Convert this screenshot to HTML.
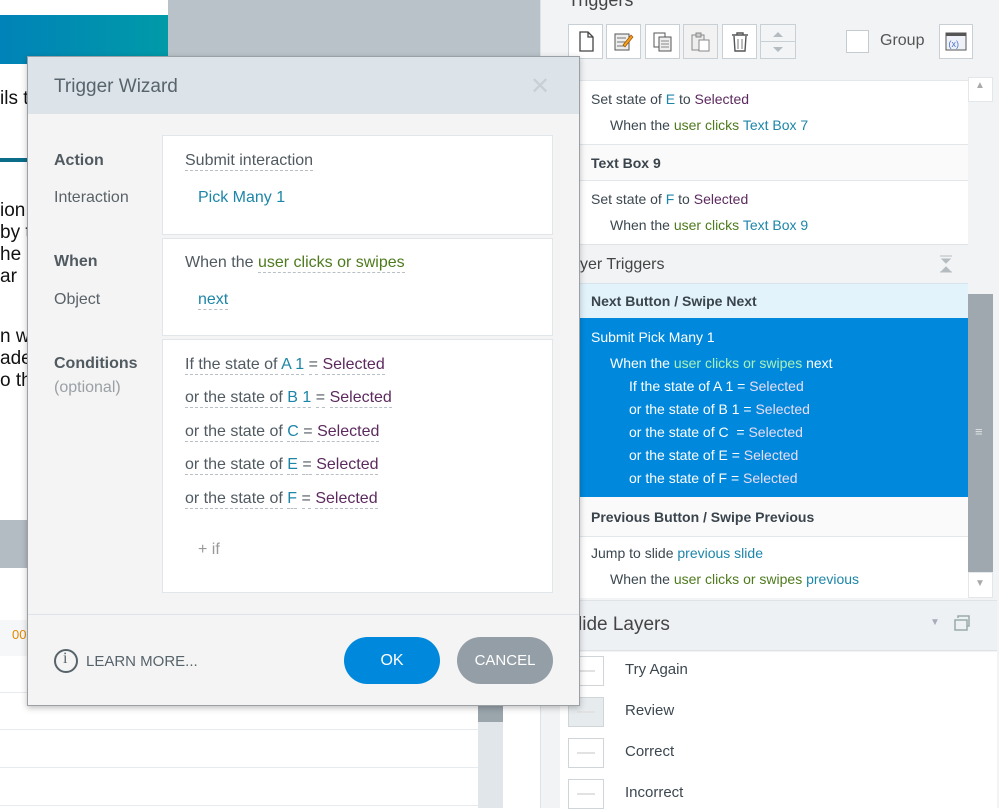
<!DOCTYPE html>
<html><head><meta charset="utf-8"><style>
*{margin:0;padding:0;box-sizing:border-box}
body{width:999px;height:808px;overflow:hidden;position:relative;background:#fff;font-family:"Liberation Sans",sans-serif;}
.a{position:absolute}
.t{position:absolute;white-space:nowrap;font-size:15px;color:#505a60}
.u{border-bottom:1px dashed #b8c0c6;padding-bottom:1px}
.bl{color:#1d86a8}.pu{color:#5c2a5e}.gr{color:#4e7a1e}
.rp{position:absolute;white-space:nowrap;font-size:14px;color:#3c4750}
.b{font-weight:bold;color:#3a444c}
.tb{position:absolute;top:24px;width:35px;height:35px;background:#fff;border:1px solid #c9d0d5}
.th{position:absolute;left:568px;width:36px;height:30px;background:#fff;border:1px solid #d0d5d9}
.th::after{content:"";position:absolute;left:8px;top:13px;width:18px;height:2px;background:#e2e2e2}
</style></head><body>
<div class="a" style="left:0;top:0;width:168px;height:520px;background:#fff"></div>
<div class="a" style="left:0;top:15px;width:168px;height:49px;background:linear-gradient(90deg,#0083b8,#009aa8)"></div>
<div class="a" style="left:0;top:158px;width:30px;height:4px;background:#0b6d88"></div>
<div class="a" style="left:168px;top:0;width:372px;height:520px;background:#b8c2c8"></div>
<div class="t" style="left:0;top:88px;font-size:19px;color:#111">ils t</div>
<div class="t" style="left:0;top:200px;font-size:19px;color:#111;line-height:22px">ion<br>by t<br>he r<br>ar</div>
<div class="t" style="left:0;top:326px;font-size:19px;color:#111;line-height:22px">n wh<br>ade<br>o th</div>
<div class="a" style="left:0;top:520px;width:540px;height:48px;background:#b3bcc3"></div>
<div class="a" style="left:0;top:568px;width:540px;height:240px;background:#fff"></div>
<div class="a" style="left:0;top:620px;width:478px;height:36px;background:#f6f7f8"></div>
<div class="t" style="left:12px;top:627px;font-size:13px;color:#e08a00">00</div>
<div class="a" style="left:0;top:692px;width:478px;height:1px;background:#e7ebee"></div>
<div class="a" style="left:0;top:729px;width:478px;height:1px;background:#e7ebee"></div>
<div class="a" style="left:0;top:767px;width:478px;height:1px;background:#e7ebee"></div>
<div class="a" style="left:0;top:805px;width:478px;height:1px;background:#e7ebee"></div>
<div class="a" style="left:478px;top:568px;width:25px;height:240px;background:#e1e6ea"></div>
<div class="a" style="left:478px;top:700px;width:25px;height:22px;background:#9aa5ac"></div>

<div class="a" style="left:540px;top:0;width:459px;height:808px;background:#f1f3f5;border-left:1px solid #dde2e6"></div>
<div class="t" style="left:568px;top:-10px;font-size:18px;color:#444">Triggers</div>
<div class="tb" style="left:568px"><svg width="33" height="33"><path d="M11 7h8l5 5v14H11z M19 7v5h5" fill="none" stroke="#444" stroke-width="1.3"/></svg></div>
<div class="tb" style="left:606px"><svg width="33" height="33"><rect x="8" y="9" width="14" height="16" fill="#eee" stroke="#555"/><path d="M10 13h9M10 17h9M10 21h7" stroke="#777"/><path d="M16 20l8-10 2 2-8 10z" fill="#f0a020" stroke="#a05000" stroke-width=".7"/></svg></div>
<div class="tb" style="left:645px"><svg width="33" height="33"><rect x="8" y="8" width="11" height="14" fill="#fff" stroke="#555"/><rect x="13" y="12" width="12" height="14" fill="#eee" stroke="#555"/><path d="M15 16h8M15 19h8M15 22h8" stroke="#888"/></svg></div>
<div class="tb" style="left:683px;background:#f2f2f2"><svg width="33" height="33"><rect x="8" y="10" width="12" height="15" fill="#eee" stroke="#888"/><rect x="12" y="8" width="5" height="4" fill="#ccc" stroke="#888"/><rect x="15" y="15" width="10" height="11" fill="#fff" stroke="#888"/></svg></div>
<div class="tb" style="left:722px"><svg width="33" height="33"><path d="M9 10h16M14 10V8h6v2M11 11l1 15h10l1-15" fill="none" stroke="#555" stroke-width="1.4"/><path d="M15 14v10M19 14v10" stroke="#777"/></svg></div>
<div class="tb" style="left:760px;width:36px;background:#f3f4f5"><div class="a" style="left:0;top:16px;width:34px;height:1px;background:#c9d0d5"></div><svg class="a" style="left:0;top:0" width="34" height="34"><path d="M12 12l5-5 5 5z M12 22l5 5 5-5z" fill="#b5bcc1"/></svg></div>
<div class="a" style="left:846px;top:30px;width:23px;height:23px;background:#fff;border:1px solid #c5ccd1"></div>
<div class="t" style="left:880px;top:32px;font-size:16px;color:#555">Group</div>
<div class="tb" style="left:939px;width:34px"><svg width="33" height="33"><rect x="6" y="8" width="20" height="17" fill="#eef2f8" stroke="#555"/><rect x="6" y="8" width="20" height="3" fill="#555"/><text x="8.5" y="22" font-size="9" fill="#4a6fd0" font-family="Liberation Sans">(x)</text></svg></div>

<div class="a" style="left:560px;top:80px;width:408px;height:518px;background:#fff;border-top:1px solid #e3e7ea"></div>
<div class="rp" style="left:591px;top:91px">Set state of <span class="bl">E</span> to <span class="pu">Selected</span></div>
<div class="rp" style="left:610px;top:117px">When the <span class="gr">user clicks</span> <span class="bl">Text Box 7</span></div>
<div class="a" style="left:560px;top:144px;width:408px;height:37px;background:#fafafa;border-top:1px solid #e3e7ea;border-bottom:1px solid #e3e7ea"></div>
<div class="rp b" style="left:591px;top:155px">Text Box 9</div>
<div class="rp" style="left:591px;top:191px">Set state of <span class="bl">F</span> to <span class="pu">Selected</span></div>
<div class="rp" style="left:610px;top:217px">When the <span class="gr">user clicks</span> <span class="bl">Text Box 9</span></div>
<div class="a" style="left:560px;top:244px;width:408px;height:39px;background:#f1f3f5;border-top:1px solid #e0e4e7"></div>
<div class="t" style="left:580px;top:256px;font-size:16px;color:#444">yer Triggers</div>
<svg class="a" style="left:938px;top:255px" width="16" height="18"><path d="M2 1h12M4 4h8l-4 4zM4 16h8l-4-4zM2 17h12" fill="#b5bcc1" stroke="#b5bcc1"/></svg>
<div class="a" style="left:560px;top:283px;width:408px;height:35px;background:#e3f3fb;border-top:1px solid #d6e3ea"></div>
<div class="rp b" style="left:591px;top:293px">Next Button / Swipe Next</div>
<div class="a" style="left:560px;top:318px;width:408px;height:179px;background:#0089dc"></div>
<div class="rp" style="left:591px;top:329px;color:#fff">Submit Pick Many 1</div>
<div class="rp" style="left:610px;top:355px;color:#fff">When the <span style="color:#a8f0b8">user clicks or swipes</span> next</div>
<div class="rp" style="left:629px;top:378px;color:#fff">If the state of A 1 = <span style="color:#eadcf5">Selected</span></div>
<div class="rp" style="left:629px;top:401px;color:#fff">or the state of B 1 = <span style="color:#eadcf5">Selected</span></div>
<div class="rp" style="left:629px;top:424px;color:#fff">or the state of C &nbsp;= <span style="color:#eadcf5">Selected</span></div>
<div class="rp" style="left:629px;top:447px;color:#fff">or the state of E = <span style="color:#eadcf5">Selected</span></div>
<div class="rp" style="left:629px;top:470px;color:#fff">or the state of F = <span style="color:#eadcf5">Selected</span></div>
<div class="a" style="left:560px;top:497px;width:408px;height:40px;background:#fafafa;border-bottom:1px solid #e3e7ea"></div>
<div class="rp b" style="left:591px;top:509px">Previous Button / Swipe Previous</div>
<div class="rp" style="left:591px;top:545px">Jump to slide <span class="bl">previous slide</span></div>
<div class="rp" style="left:610px;top:571px">When the <span class="gr">user clicks or swipes</span> <span class="bl">previous</span></div>
<div class="a" style="left:968px;top:77px;width:25px;height:521px;background:#9ea8ae"></div>
<div class="a" style="left:968px;top:77px;width:25px;height:25px;background:#fff;border:1px solid #e3e7ea"></div>
<div class="a" style="left:968px;top:102px;width:25px;height:192px;background:#f1f3f5"></div>
<div class="a" style="left:968px;top:572px;width:25px;height:26px;background:#fff;border:1px solid #e3e7ea"></div>
<div class="t" style="left:975px;top:80px;font-size:10px;color:#aaa">▲</div>
<div class="t" style="left:975px;top:578px;font-size:10px;color:#aaa">▼</div>
<div class="t" style="left:975px;top:424px;font-size:13px;color:#dfe3e6">≡</div>
<div class="a" style="left:560px;top:600px;width:437px;height:51px;background:#eef1f4;border-top:1px solid #dfe3e6;border-bottom:1px solid #dfe3e6"></div>
<div class="t" style="left:578px;top:614px;font-size:19px;color:#444">lide Layers</div>
<div class="t" style="left:930px;top:617px;font-size:10px;color:#aab">▼</div>
<svg class="a" style="left:954px;top:615px" width="16" height="18"><rect x="1" y="5" width="12" height="10" fill="none" stroke="#9aa" stroke-width="1.5"/><path d="M4 3V1h11v10h-2" fill="none" stroke="#9aa" stroke-width="1.5"/></svg>
<div class="a" style="left:560px;top:652px;width:437px;height:156px;background:#fff"></div>
<div class="th" style="top:656px"></div><div class="rp" style="left:625px;top:661px;font-size:15px">Try Again</div>
<div class="th" style="top:697px;background:#e6ebee"></div><div class="rp" style="left:625px;top:702px;font-size:15px">Review</div>
<div class="th" style="top:738px"></div><div class="rp" style="left:625px;top:743px;font-size:15px">Correct</div>
<div class="th" style="top:779px"></div><div class="rp" style="left:625px;top:784px;font-size:15px">Incorrect</div>

<div class="a" style="left:27px;top:56px;width:553px;height:650px;background:#f4f4f4;border:1px solid #9aa0a4;box-shadow:0 2px 6px rgba(0,0,0,.25)"></div>
<div class="a" style="left:28px;top:57px;width:551px;height:57px;background:#dce3e9"></div>
<div class="t" style="left:54px;top:76px;font-size:19px;color:#57646c">Trigger Wizard</div>
<div class="t" style="left:530px;top:72px;font-size:24px;color:#c9d0d5">✕</div>
<div class="a" style="left:162px;top:135px;width:391px;height:100px;background:#fff;border:1px solid #e0e6ea"></div>
<div class="a" style="left:162px;top:238px;width:391px;height:98px;background:#fff;border:1px solid #e0e6ea"></div>
<div class="a" style="left:162px;top:339px;width:391px;height:254px;background:#fff;border:1px solid #e0e6ea"></div>
<div class="t b" style="left:54px;top:152px;font-size:16px;color:#505a60">Action</div>
<div class="t" style="left:54px;top:189px;font-size:16px;color:#5a6268">Interaction</div>
<div class="t b" style="left:54px;top:253px;font-size:16px;color:#505a60">When</div>
<div class="t" style="left:54px;top:291px;font-size:16px;color:#5a6268">Object</div>
<div class="t b" style="left:54px;top:355px;font-size:16px;color:#505a60">Conditions</div>
<div class="t" style="left:54px;top:379px;font-size:16px;color:#9aa0a4">(optional)</div>
<div class="t" style="left:185px;top:152px;font-size:16px"><span class="u">Submit interaction</span></div>
<div class="t bl" style="left:198px;top:189px;font-size:16px">Pick Many 1</div>
<div class="t" style="left:185px;top:254px;font-size:16px">When the <span class="u gr">user clicks or swipes</span></div>
<div class="t bl" style="left:198px;top:291px;font-size:16px"><span class="u">next</span></div>
<div class="t" style="left:185px;top:348px;font-size:16px;line-height:33.4px"><span class="u">If the state of</span> <span class="u bl">A 1</span> <span class="u">=</span> <span class="u pu">Selected</span><br><span class="u">or the state of</span> <span class="u bl">B 1</span> <span class="u">=</span> <span class="u pu">Selected</span><br><span class="u">or the state of</span> <span class="u bl">C </span> <span class="u">=</span> <span class="u pu">Selected</span><br><span class="u">or the state of</span> <span class="u bl">E</span> <span class="u">=</span> <span class="u pu">Selected</span><br><span class="u">or the state of</span> <span class="u bl">F</span> <span class="u">=</span> <span class="u pu">Selected</span></div>
<div class="t" style="left:198px;top:541px;font-size:16px;color:#999">+ if</div>
<div class="a" style="left:28px;top:614px;width:551px;height:1px;background:#dde3e8"></div>
<div class="a" style="left:54px;top:649px;width:24px;height:24px;border:2px solid #56636a;border-radius:50%"></div>
<div class="t" style="left:63px;top:650px;font-size:16px;color:#56636a;font-family:'Liberation Serif',serif">i</div>
<div class="t" style="left:86px;top:653px;font-size:15px;color:#56636a">LEARN MORE...</div>
<div class="a" style="left:344px;top:637px;width:96px;height:47px;background:#0088dc;border-radius:24px;color:#fff;font-size:16px;text-align:center;line-height:47px">OK</div>
<div class="a" style="left:457px;top:637px;width:96px;height:47px;background:#949ea6;border-radius:24px;color:#fff;font-size:15px;text-align:center;line-height:47px">CANCEL</div>
</body></html>
